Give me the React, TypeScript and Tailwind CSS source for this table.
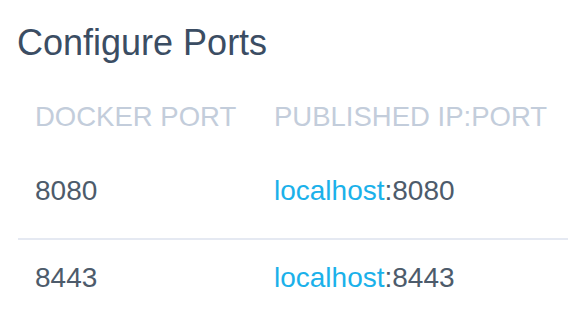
import React from "react";

const ports = [
  { docker: "8080", host: "localhost", published: "8080" },
  { docker: "8443", host: "localhost", published: "8443" },
];

export default function App() {
  return (
    <div className="w-[568px] h-[312px] overflow-hidden bg-white font-['Liberation_Sans',Arial,sans-serif]">
      <h1 className="pl-[17px] pt-[25px] text-[36px] leading-none font-normal text-[#3b4d63]">
        Configure Ports
      </h1>

      <div className="ml-[18px] mt-[42px] w-[560px]">
        <div className="grid grid-cols-[239px_1fr] pb-[22px] text-[27.5px] leading-none uppercase text-[#c3cddb]">
          <div className="pl-[17px]">Docker Port</div>
          <div className="pl-[17px]">Published IP:Port</div>
        </div>

        {ports.map((p, i) => (
          <div
            key={i}
            className={`grid grid-cols-[239px_1fr] pt-[24px] pb-[33px] text-[28px] leading-none text-[#4d5b6b] ${i === 0 ? "border-b-2 border-[#e5e9f2]" : ""}`}
          >
            <div className="pl-[17px]">{p.docker}</div>
            <div className="pl-[17px]">
              <span className="text-[#1bb1ea]">{p.host}</span>:{p.published}
            </div>
          </div>
        ))}
      </div>
    </div>
  );
}
